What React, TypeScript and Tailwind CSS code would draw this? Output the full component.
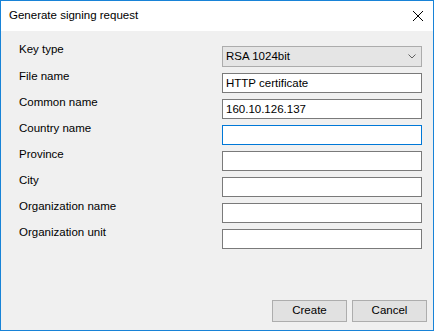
import React from "react";

const font = { fontFamily: '"Liberation Sans", Arial, sans-serif' };

function Row({ label, children, h = 26 }: { label: string; children: React.ReactNode; h?: number }) {
  return (
    <div className="flex" style={{ height: h }}>
      <div className="w-[221px] shrink-0 pl-[18px] text-[11.5px] leading-[15px] text-black">{label}</div>
      <div className="mt-[4px]">{children}</div>
    </div>
  );
}

function TextBox({ value = "", focused = false }: { value?: string; focused?: boolean }) {
  return (
    <div
      className={`w-[200px] h-[20px] bg-white border ${focused ? "border-[#0078d7]" : "border-[#7a7a7a]"} pl-[3px] text-[11.5px] leading-[18px] text-black`}
    >
      {value}
    </div>
  );
}

export default function App() {
  return (
    <div className="w-[435px] h-[332px] bg-white" style={font}>
      <div className="w-[434px] h-[331px] border border-[#1883d7] flex flex-col bg-[#f0f0f0]">
        <div className="h-[30px] bg-white flex items-center justify-between pl-[8px] pr-[8px]">
          <span className="text-[11.5px] text-black">Generate signing request</span>
          <svg width="12" height="12" viewBox="0 0 12 12" className="mr-[1px]">
            <path d="M1 1 L11 11 M11 1 L1 11" stroke="#000" strokeWidth="1" fill="none" />
          </svg>
        </div>
        <div className="flex-1 flex flex-col pt-[11px]">
          <Row label="Key type" h={27}>
            <div className="w-[200px] h-[21px] bg-[#e5e5e5] border border-[#acacac] flex items-center justify-between pl-[3px] pr-[5px] text-[11.5px] text-black">
              <span>RSA 1024bit</span>
              <svg width="8" height="5" viewBox="0 0 8 5">
                <path d="M0.5 0.5 L4 4 L7.5 0.5" stroke="#606060" strokeWidth="1" fill="none" />
              </svg>
            </div>
          </Row>
          <Row label="File name">
            <TextBox value="HTTP certificate" />
          </Row>
          <Row label="Common name">
            <TextBox value="160.10.126.137" />
          </Row>
          <Row label="Country name">
            <TextBox focused />
          </Row>
          <Row label="Province">
            <TextBox />
          </Row>
          <Row label="City">
            <TextBox />
          </Row>
          <Row label="Organization name">
            <TextBox />
          </Row>
          <Row label="Organization unit">
            <TextBox />
          </Row>
          <div className="flex-1" />
          <div className="flex justify-end gap-[5px] pr-[6px] pb-[8px]">
            <button className="w-[75px] h-[22px] bg-[#e1e1e1] border border-[#adadad] text-[11.5px] text-black">Create</button>
            <button className="w-[75px] h-[22px] bg-[#e1e1e1] border border-[#adadad] text-[11.5px] text-black">Cancel</button>
          </div>
        </div>
      </div>
    </div>
  );
}
